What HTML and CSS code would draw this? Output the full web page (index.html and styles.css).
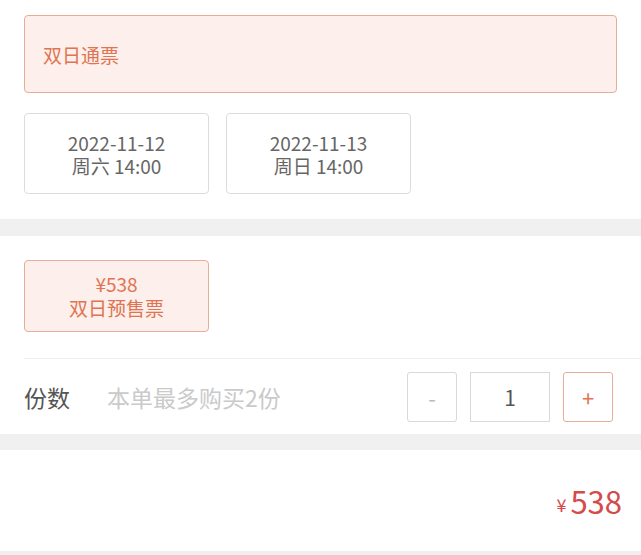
FILE: index.html
```html
<!DOCTYPE html>
<html lang="zh-CN">
<head>
<meta charset="utf-8">
<link rel="stylesheet" href="styles.css">
</head>
<body>
<section class="section session">
  <div class="pass selected">双日通票</div>
  <div class="dates">
    <div class="date-box"><div>2022-11-12</div><div>周六 14:00</div></div>
    <div class="date-box"><div>2022-11-13</div><div>周日 14:00</div></div>
  </div>
</section>
<div class="band"></div>
<section class="section tickets">
  <div class="ticket selected"><div>¥538</div><div>双日预售票</div></div>
  <div class="qty-row">
    <span class="qty-label">份数</span>
    <span class="qty-hint">本单最多购买2份</span>
    <div class="stepper">
      <div class="step minus">-</div>
      <div class="count">1</div>
      <div class="step plus">+</div>
    </div>
  </div>
</section>
<div class="band band2"></div>
<section class="total">
  <span class="yen">¥</span><span class="amount">538</span>
</section>
<div class="band band3"></div>
</body>
</html>
```

FILE: styles.css
```css
html, body {
  margin: 0;
  padding: 0;
  background: #fff;
  font-family: "Noto Sans CJK SC", "Noto Sans", sans-serif;
  overflow: hidden;
}
.session {
  padding: 15px 24px 25px 24px;
}
.selected {
  background: #fdefeb;
  border: 1px solid #e8ad98;
  border-radius: 4px;
  color: #e07452;
  box-sizing: border-box;
}
.pass {
  height: 78px;
  display: flex;
  align-items: center;
  padding-left: 18px;
  font-size: 19px;
}
.dates {
  display: flex;
  gap: 17px;
  margin-top: 20px;
}
.date-box {
  width: 185px;
  height: 81px;
  box-sizing: border-box;
  border: 1px solid #dcdcdc;
  border-radius: 4px;
  display: flex;
  flex-direction: column;
  justify-content: center;
  align-items: center;
  color: #666;
  font-size: 19px;
  line-height: 23px;
}
.band {
  height: 17px;
  background: #f0f0f0;
}
.band2 { height: 16px; }
.band3 { height: 10px; }
.tickets {
  padding: 24px 0 0 24px;
}
.ticket {
  width: 185px;
  height: 72px;
  display: flex;
  flex-direction: column;
  justify-content: center;
  align-items: center;
  font-size: 19px;
  line-height: 24px;
}
.qty-row {
  margin-top: 26px;
  border-top: 1px solid #efefef;
  height: 75px;
  display: flex;
  align-items: center;
  padding-right: 28px;
}
.qty-label {
  font-size: 23px;
  color: #555;
  width: 83px;
}
.qty-hint {
  font-size: 23px;
  color: #cacaca;
  flex: 1;
}
.stepper {
  display: flex;
  gap: 13px;
}
.step, .count {
  height: 50px;
  box-sizing: border-box;
  border: 1px solid #d9d9d9;
  border-radius: 3px;
  display: flex;
  align-items: center;
  justify-content: center;
}
.step {
  width: 50px;
  font-size: 22px;
}
.minus { color: #bbb; }
.plus {
  color: #e07452;
  border-color: #e8ad98;
}
.count {
  width: 80px;
  border-radius: 0;
  font-size: 21px;
  color: #555;
}
.total {
  height: 101px;
  display: flex;
  justify-content: flex-end;
  align-items: center;
  padding-right: 19px;
  color: #d54a4a;
}
.yen {
  font-size: 18px;
  margin-right: 4px;
  margin-top: 7px;
}
.amount {
  font-size: 31px;
}
```
